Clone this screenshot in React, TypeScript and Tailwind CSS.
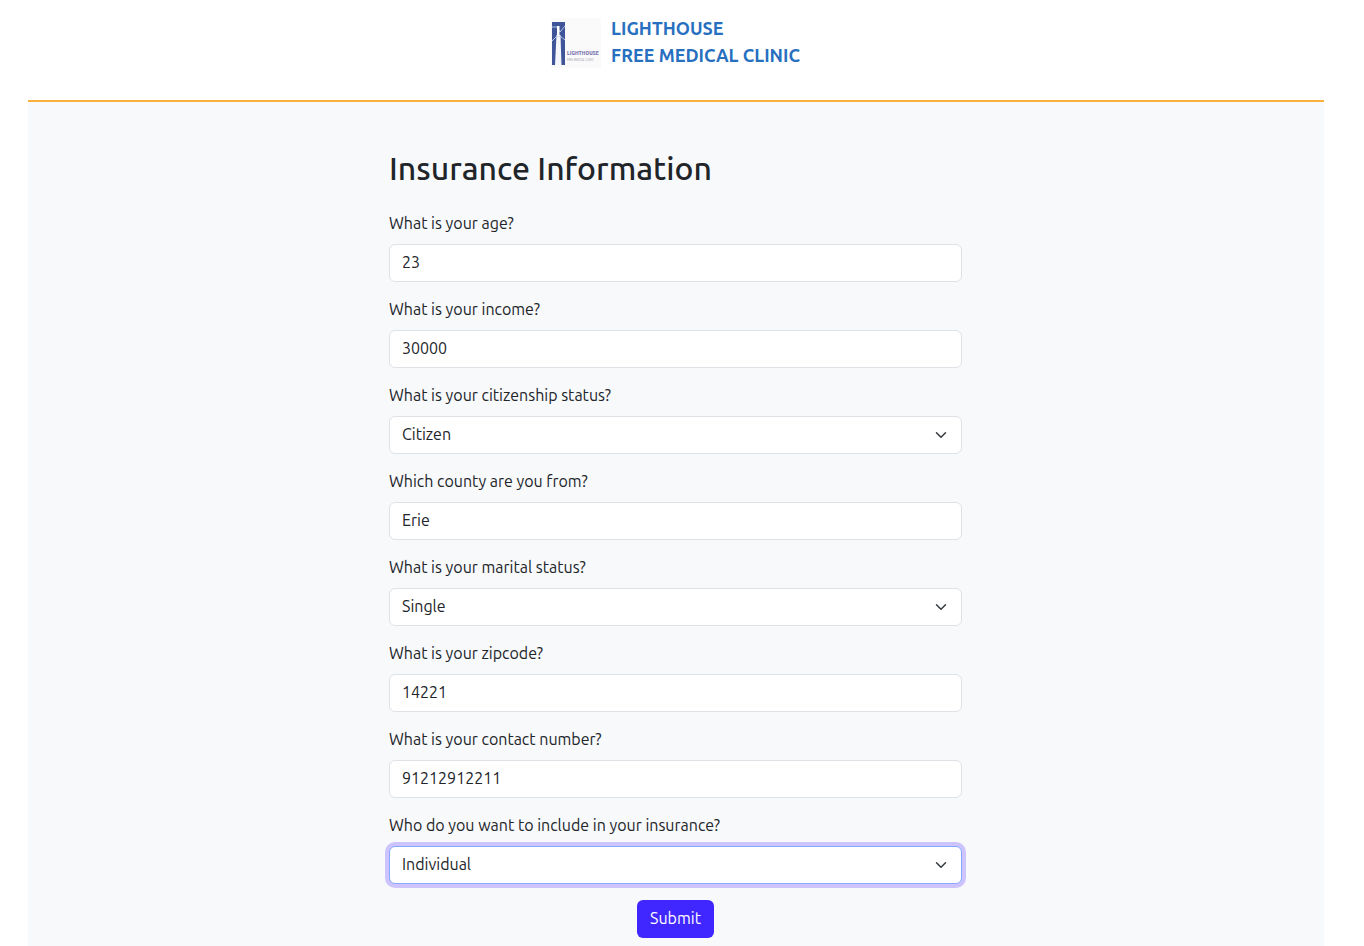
import { useState } from "react";
import type { ReactNode } from "react";

const controlClass =
  "block h-[38px] w-full appearance-none rounded-md border border-[#dee2e6] bg-white px-3 pb-[7px] pt-[5px] text-base leading-6 text-[#212529] outline-none focus:border-[#86a8fe] focus:ring-4 focus:ring-[#cdc4fd]";

function Field({ id, label, children }: { id: string; label: string; children: ReactNode }) {
  return (
    <div className="flex flex-col gap-2">
      <label htmlFor={id} className="pb-0.5 text-base leading-[22px]">
        {label}
      </label>
      {children}
    </div>
  );
}

function TextField({ id, label, value }: { id: string; label: string; value: string }) {
  return (
    <Field id={id} label={label}>
      <input id={id} name={id} type="text" defaultValue={value} className={controlClass} />
    </Field>
  );
}

function SelectField({
  id,
  label,
  options,
  autoFocus,
}: {
  id: string;
  label: string;
  options: string[];
  autoFocus?: boolean;
}) {
  const [value, setValue] = useState(options[0]);
  return (
    <Field id={id} label={label}>
      <div className="relative">
        <select
          id={id}
          name={id}
          value={value}
          autoFocus={autoFocus}
          onChange={(e) => setValue(e.target.value)}
          className={controlClass}
        >
          {options.map((o) => (
            <option key={o}>{o}</option>
          ))}
        </select>
        <svg
          viewBox="0 0 16 16"
          className="pointer-events-none absolute right-[13px] top-[13px] h-3 w-4"
          fill="none"
          stroke="#343a40"
          strokeWidth="2"
          strokeLinecap="round"
          strokeLinejoin="round"
          aria-hidden="true"
        >
          <path d="m2 5 6 6 6-6" />
        </svg>
      </div>
    </Field>
  );
}

function Logo() {
  return (
    <svg viewBox="0 0 50 50" className="size-[50px]" role="img" aria-label="Lighthouse">
      <rect width="50" height="50" fill="#fafafb" />
      <rect x="1" y="4" width="13" height="43" fill="#3f5499" />
      <path d="M5.500 17h4l1 30H4z" fill="#f4f6fb" />
      <path d="M1 9h5l3 5 5-6M1 23l5-5h3l5 4" stroke="#b5c6e6" strokeWidth="1" fill="none" />
      <path d="M6 8h2.500v10H6z" fill="#fff" />
      <text x="16" y="37" fontSize="6" fontWeight="700" fill="#7a74ad" fontFamily="Ubuntu Condensed, Roboto Condensed, Open Sans Condensed, sans-serif">
        LIGHTHOUSE
      </text>
      <text x="16" y="43" fontSize="3" fill="#a9abb3" fontFamily="Ubuntu Condensed, Roboto Condensed, Open Sans Condensed, sans-serif">
        FREE MEDICAL CLINIC
      </text>
    </svg>
  );
}

export default function App() {
  return (
    <div className="flex min-h-screen flex-col bg-white pl-7 pr-10 font-['Ubuntu','Noto_Sans',sans-serif] text-[#212529]">
      <header className="flex items-start justify-center gap-2.5 border-b-2 border-[#fbb03b] pb-[31px] pr-px pt-[15px]">
        <div className="pt-[3px]">
          <Logo />
        </div>
        <p className="text-lg font-semibold leading-[27px] text-[#276fbf]">
          LIGHTHOUSE
          <br />
          FREE MEDICAL CLINIC
        </p>
      </header>
      <main className="flex-1 bg-[#f8f9fb] pb-2 pr-px pt-12">
        <form className="mx-auto flex w-full max-w-[573px] flex-col gap-4" onSubmit={(e) => e.preventDefault()}>
          <h1 className="mb-2 pb-0.5 text-[32px] font-medium leading-9">Insurance Information</h1>
          <TextField id="age" label="What is your age?" value="23" />
          <TextField id="income" label="What is your income?" value="30000" />
          <SelectField id="citizenship" label="What is your citizenship status?" options={["Citizen"]} />
          <TextField id="county" label="Which county are you from?" value="Erie" />
          <SelectField id="marital" label="What is your marital status?" options={["Single"]} />
          <TextField id="zipcode" label="What is your zipcode?" value="14221" />
          <TextField id="contact" label="What is your contact number?" value="91212912211" />
          <SelectField
            id="include"
            label="Who do you want to include in your insurance?"
            options={["Individual"]}
            autoFocus
          />
          <button
            type="submit"
            className="h-[38px] self-center rounded-md bg-[#4026ff] px-[13px] pb-0.5 text-base leading-6 text-white"
          >
            Submit
          </button>
        </form>
      </main>
    </div>
  );
}
